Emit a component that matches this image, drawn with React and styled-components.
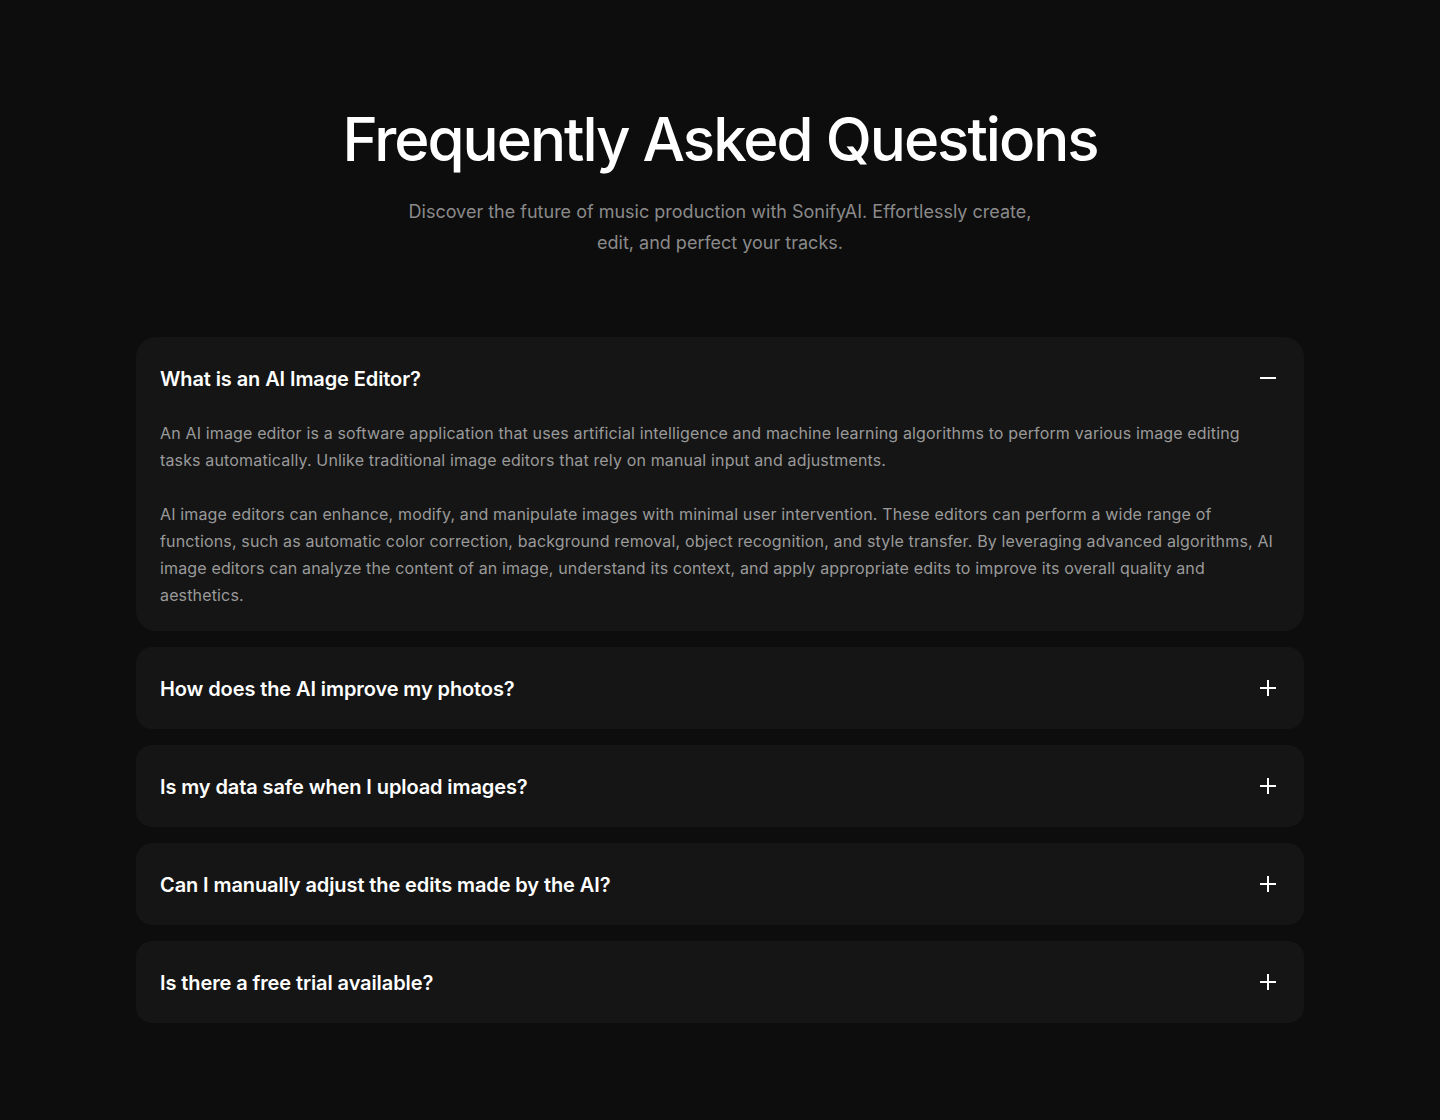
import React, { useState } from "react";
import styled, { createGlobalStyle } from "styled-components";

const Global = createGlobalStyle`
  html, body { margin: 0; padding: 0; background: #0d0d0d; }
  body { font-family: "Inter", "Noto Sans", sans-serif; -webkit-font-smoothing: antialiased; }
  * { box-sizing: border-box; }
`;

const Page = styled.main`
  min-height: 1120px;
  background: #0d0d0d;
  padding: 103px 136px 96px;
  display: flex;
  flex-direction: column;
  align-items: center;
`;

const Title = styled.h1`
  margin: 0;
  font-size: 60px;
  line-height: 72px;
  font-weight: 500;
  letter-spacing: -2px;
  color: #ffffff;
  text-align: center;
`;

const Subtitle = styled.p`
  margin: 21px 0 0;
  max-width: 640px;
  font-size: 18px;
  line-height: 31px;
  color: #8a8a8a;
  text-align: center;
`;

const List = styled.div`
  margin-top: 79px;
  width: 100%;
  display: flex;
  flex-direction: column;
  gap: 16px;
`;

const Card = styled.div`
  background: #151515;
  border-radius: ${(p) => (p.$open ? "20px" : "16px")};
  padding: 24px 24px ${(p) => (p.$open ? "22px" : "24px")};
`;

const Header = styled.button`
  all: unset;
  cursor: pointer;
  width: 100%;
  display: flex;
  align-items: center;
  justify-content: space-between;
  height: 34px;
`;

const Question = styled.span`
  font-size: 20px;
  font-weight: 600;
  color: #ffffff;
  letter-spacing: -0.1px;
  padding-top: 2px;
`;

const IconBox = styled.span`
  width: 24px;
  height: 24px;
  display: flex;
  align-items: center;
  justify-content: center;
`;

const Answer = styled.div`
  margin-top: 25px;
  font-size: 16px;
  line-height: 27px;
  letter-spacing: 0.15px;
  color: #9a9a9a;
  p { margin: 0; }
  p + p { margin-top: 27px; }
`;

const Icon = ({ open }) => (
  <svg width="16" height="16" viewBox="0 0 16 16" fill="none" stroke="#fff" strokeWidth="2">
    <line x1="0" y1="8" x2="16" y2="8" />
    {!open && <line x1="8" y1="0" x2="8" y2="16" />}
  </svg>
);

const faqs = [
  {
    q: "What is an AI Image Editor?",
    a: [
      "An AI image editor is a software application that uses artificial intelligence and machine learning algorithms to perform various image editing tasks automatically. Unlike traditional image editors that rely on manual input and adjustments.",
      "AI image editors can enhance, modify, and manipulate images with minimal user intervention. These editors can perform a wide range of functions, such as automatic color correction, background removal, object recognition, and style transfer. By leveraging advanced algorithms, AI image editors can analyze the content of an image, understand its context, and apply appropriate edits to improve its overall quality and aesthetics.",
    ],
  },
  { q: "How does the AI improve my photos?", a: ["Our AI analyzes lighting, color and composition to apply the best edits automatically."] },
  { q: "Is my data safe when I upload images?", a: ["Yes. Your images are encrypted and never shared."] },
  { q: "Can I manually adjust the edits made by the AI?", a: ["Absolutely. Every edit can be fine-tuned by hand."] },
  { q: "Is there a free trial available?", a: ["Yes, you can try all features for free."] },
];

export default function App() {
  const [open, setOpen] = useState(0);
  return (
    <>
      <Global />
      <Page>
        <Title>Frequently Asked Questions</Title>
        <Subtitle>
          Discover the future of music production with SonifyAI. Effortlessly create, edit, and perfect your tracks.
        </Subtitle>
        <List>
          {faqs.map((f, i) => (
            <Card key={i} $open={open === i}>
              <Header onClick={() => setOpen(open === i ? -1 : i)}>
                <Question>{f.q}</Question>
                <IconBox>
                  <Icon open={open === i} />
                </IconBox>
              </Header>
              {open === i && (
                <Answer>
                  {f.a.map((t, j) => (
                    <p key={j}>{t}</p>
                  ))}
                </Answer>
              )}
            </Card>
          ))}
        </List>
      </Page>
    </>
  );
}
